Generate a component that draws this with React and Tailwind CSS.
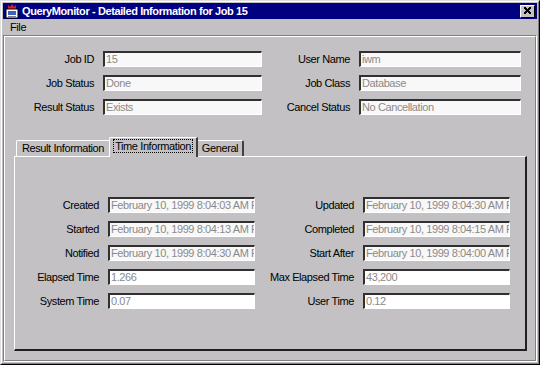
import React from 'react'

const topLeft = [
  { label: 'Job ID', value: '15' },
  { label: 'Job Status', value: 'Done' },
  { label: 'Result Status', value: 'Exists' },
]
const topRight = [
  { label: 'User Name', value: 'iwm' },
  { label: 'Job Class', value: 'Database' },
  { label: 'Cancel Status', value: 'No Cancellation' },
]
const timeLeft = [
  { label: 'Created', value: 'February 10, 1999 8:04:03 AM PST' },
  { label: 'Started', value: 'February 10, 1999 8:04:13 AM PST' },
  { label: 'Notified', value: 'February 10, 1999 8:04:30 AM PST' },
  { label: 'Elapsed Time', value: '1.266', white: true },
  { label: 'System Time', value: '0.07', white: true },
]
const timeRight = [
  { label: 'Updated', value: 'February 10, 1999 8:04:30 AM PST' },
  { label: 'Completed', value: 'February 10, 1999 8:04:15 AM PST' },
  { label: 'Start After', value: 'February 10, 1999 8:04:00 AM PST' },
  { label: 'Max Elapsed Time', value: '43,200', white: true },
  { label: 'User Time', value: '0.12', white: true },
]

function Field({ label, value, labelW, inputW, white }) {
  return (
    <div className="flex items-center h-4">
      <span className="text-right text-black whitespace-nowrap" style={{ width: labelW }}>
        {label}
      </span>
      <div
        className={`ml-[9px] h-4 border-t-2 border-l-2 border-t-[#303030] border-l-[#303030] border-b border-r border-b-white border-r-white overflow-hidden whitespace-nowrap text-[#8a8a8a] pl-[1px] leading-[13px] ${
          white ? 'bg-white' : 'bg-[#f8f8f8]'
        }`}
        style={{ width: inputW }}
      >
        {value}
      </div>
    </div>
  )
}

function AppIcon() {
  return (
    <svg width="14" height="15" viewBox="0 0 14 15">
      <path d="M3 1 L5 3 L7 0 L9 3 L11 1 L11 5 L3 5 Z" fill="#e02020" />
      <rect x="1" y="5" width="12" height="9" fill="#ffffff" stroke="#000" strokeWidth="1" />
      <rect x="3" y="7" width="8" height="4" fill="#4060c0" />
      <rect x="3" y="12" width="8" height="1" fill="#808080" />
    </svg>
  )
}

export default function App() {
  return (
    <div className="w-[540px] h-[365px] bg-[#c3c1c3] font-['Liberation_Sans',Arial,sans-serif] text-[11px] tracking-[-0.4px] overflow-hidden flex flex-col border-t border-l border-t-[#dfdfdf] border-l-[#dfdfdf] border-r border-b border-r-black border-b-black">
      <div className="flex flex-col flex-1 border-t border-l border-t-white border-l-white border-r border-b border-r-[#808080] border-b-[#808080] p-[1px]">
        {/* Title bar */}
        <div className="h-4 bg-[#000080] flex items-center pl-[2px] pr-[2px] shrink-0">
          <AppIcon />
          <span className="ml-[3px] text-white font-bold tracking-[-0.4px]">
            QueryMonitor - Detailed Information for Job 15
          </span>
          <div className="ml-auto w-[15px] h-[13px] bg-[#c3c1c3] border-t border-l border-t-white border-l-white border-r border-b border-r-black border-b-black flex items-center justify-center">
            <svg width="9" height="8" viewBox="0 0 9 8">
              <path d="M1 0 L8 7 M2 0 L8 6 M1 1 L7 7 M8 0 L1 7 M7 0 L1 6 M8 1 L2 7" stroke="#000" strokeWidth="1" />
            </svg>
          </div>
        </div>

        {/* Menu */}
        <div className="h-[16px] flex items-center pl-[7px] shrink-0">
          <span>File</span>
        </div>

        {/* Content */}
        <div className="flex-1 flex flex-col border-t border-l border-t-[#808080] border-l-[#808080] border-r border-b border-r-white border-b-white">
          <div className="flex-1 flex flex-col border-t border-l border-t-white border-l-white border-r border-b border-r-[#808080] border-b-[#808080] pt-[14px]">
            <div className="flex">
              <div className="flex flex-col gap-2 ml-[3px]">
                {topLeft.map((f) => (
                  <Field key={f.label} {...f} labelW={86} inputW={159} />
                ))}
              </div>
              <div className="flex flex-col gap-2 ml-[5px]">
                {topRight.map((f) => (
                  <Field key={f.label} {...f} labelW={83} inputW={162} />
                ))}
              </div>
            </div>

            {/* Tabs */}
            <div className="mt-[22px] ml-[9px] mr-[8px] flex flex-col flex-1 mb-[9px]">
              <div className="flex items-end h-[19px] pl-[2px] relative z-10">
                <div className="h-[16px] w-[94px] flex items-center justify-center border-t border-l border-t-white border-l-white border-r border-r-[#404040] rounded-tl-[2px]">
                  Result Information
                </div>
                <div className="h-[20px] -mb-[1px] w-[89px] -ml-[1px] bg-[#c3c1c3] flex items-start justify-center pt-[2px] border-t border-l border-t-white border-l-white border-r-2 border-r-[#404040] rounded-tl-[2px]">
                  <span className="outline outline-1 outline-dotted outline-black px-[1px] leading-[12px]">
                    Time Information
                  </span>
                </div>
                <div className="h-[16px] w-[46px] flex items-center justify-center border-t border-t-white border-r-2 border-r-[#404040] rounded-tr-[2px]">
                  General
                </div>
              </div>
              <div className="flex-1 border-t border-l border-t-white border-l-white border-r-2 border-b-2 border-r-[#202020] border-b-[#202020] pt-[40px]">
                <div className="flex">
                  <div className="flex flex-col gap-2">
                    {timeLeft.map((f) => (
                      <Field key={f.label} {...f} labelW={84} inputW={147} />
                    ))}
                  </div>
                  <div className="flex flex-col gap-2 ml-[8px]">
                    {timeRight.map((f) => (
                      <Field key={f.label} {...f} labelW={91} inputW={147} />
                    ))}
                  </div>
                </div>
              </div>
            </div>
          </div>
        </div>
      </div>
    </div>
  )
}
